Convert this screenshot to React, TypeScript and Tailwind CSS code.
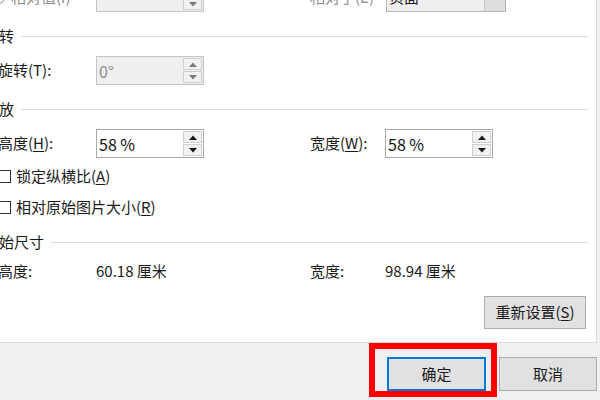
import React from "react";

const font = "font-['Microsoft_YaHei','Noto_Sans_CJK_SC','Noto_Sans',sans-serif]";

function Arrow({ up, gray }: { up?: boolean; gray?: boolean }) {
  return (
    <svg width="8" height="5" viewBox="0 0 8 5">
      <path
        d={up ? "M0 5 L4 0.5 L8 5 Z" : "M0 0 L4 4.5 L8 0 Z"}
        fill={gray ? "#7a7a7a" : "#1a1a1a"}
      />
    </svg>
  );
}

function Spinner({ disabled }: { disabled?: boolean }) {
  return (
    <div className="flex h-full w-[20px] flex-col gap-[1px] py-[1px] pr-[1px]">
      <div className="flex flex-1 items-center justify-center border border-[#cfcfcf] bg-[#f2f2f2]">
        <Arrow up gray={disabled} />
      </div>
      <div className="flex flex-1 items-center justify-center border border-[#cfcfcf] bg-[#f2f2f2]">
        <Arrow gray={disabled} />
      </div>
    </div>
  );
}

function NumberBox({ value, disabled }: { value: string; disabled?: boolean }) {
  return (
    <div
      className={`flex h-[29px] w-[108px] shrink-0 items-stretch border ${
        disabled ? "border-[#c4c4c4] bg-[#efefef]" : "border-[#a8a8a8] bg-white"
      }`}
    >
      <span
        className={`flex flex-1 items-center pl-[2px] text-[16px] ${
          disabled ? "text-[#8d8d8d]" : "text-[#111]"
        }`}
      >
        {value}
      </span>
      <Spinner disabled={disabled} />
    </div>
  );
}

function Section({ title }: { title: string }) {
  return (
    <div className="flex h-[20px] items-center gap-[7px] pr-[8px]">
      <span className="-ml-[1px] text-[15px] text-[#1a1a1a]">{title}</span>
      <div className="h-px flex-1 bg-[#d9d9d9]" />
    </div>
  );
}

function Label({ children }: { children: React.ReactNode }) {
  return (
    <span className="w-[96px] shrink-0 -translate-x-[2px] text-[15px] text-[#1a1a1a]">
      {children}
    </span>
  );
}

function Checkbox({ children }: { children: React.ReactNode }) {
  return (
    <div className="flex h-[20px] items-center gap-[5px]">
      <div className="-ml-[2px] h-[13px] w-[13px] border border-[#333] bg-white" />
      <span className="text-[15px] text-[#1a1a1a]">{children}</span>
    </div>
  );
}

export default function App() {
  return (
    <div className={`flex h-[400px] w-[600px] flex-col overflow-hidden bg-[#f0f0f0] ${font}`}>
      {/* PANEL */}
      <div className="h-[343px] w-[597px] shrink-0 overflow-hidden border-r border-b border-[#dadada] bg-white">
        <div className="-mt-[17px] flex flex-col">
          {/* TOP ROW (cut off) */}
          <div className="flex h-[29px] items-center">
            <div className="flex w-[96px] shrink-0 items-center gap-[6px]">
              <div className="-ml-[8px] h-[13px] w-[13px] rounded-full border border-[#888]" />
              <span className="text-[15px] text-[#8d8d8d]">相对值(I)</span>
            </div>
            <NumberBox value="" disabled />
            <span className="ml-[106px] w-[76px] shrink-0 text-[15px] text-[#8d8d8d]">相对于(E)</span>
            <div className="flex h-[29px] w-[120px] border border-[#b5b5b5] bg-[#efefef]">
              <span className="flex flex-1 items-center pl-[2px] text-[15px] text-[#1a1a1a]">页面</span>
              <div className="w-[21px] border-l border-[#c4c4c4] bg-[#dedede]" />
            </div>
          </div>

          <div className="mt-[14px]">
            <Section title="转" />
          </div>

          <div className="mt-[10px] flex h-[29px] items-center">
            <Label>旋转(T):</Label>
            <NumberBox value="0°" disabled />
          </div>

          <div className="mt-[14px]">
            <Section title="放" />
          </div>

          <div className="mt-[10px] flex h-[29px] items-center">
            <Label>
              高度(<span className="underline underline-offset-2">H</span>):
            </Label>
            <NumberBox value="58 %" />
            <span className="ml-[106px] w-[75px] shrink-0 text-[15px] text-[#1a1a1a]">
              宽度(<span className="underline underline-offset-2">W</span>):
            </span>
            <NumberBox value="58 %" />
          </div>

          <div className="mt-[8px]">
            <Checkbox>
              锁定纵横比(<span className="underline underline-offset-2">A</span>)
            </Checkbox>
          </div>
          <div className="mt-[11px]">
            <Checkbox>
              相对原始图片大小(<span className="underline underline-offset-2">R</span>)
            </Checkbox>
          </div>

          <div className="mt-[15px]">
            <Section title="始尺寸" />
          </div>

          <div className="mt-[9px] flex h-[20px] items-center text-[15px] text-[#1a1a1a]">
            <Label>高度:</Label>
            <span className="w-[214px] shrink-0">60.18 厘米</span>
            <span className="w-[75px] shrink-0">宽度:</span>
            <span>98.94 厘米</span>
          </div>

          <div className="mt-[15px] flex justify-end pr-[10px]">
            <button
              type="button"
              className="h-[33px] w-[102px] border border-[#adadad] bg-[#e1e1e1] text-[15px] text-[#1a1a1a]"
            >
              重新设置(<span className="underline underline-offset-2">S</span>)
            </button>
          </div>
        </div>
      </div>

      {/* FOOTER BUTTONS */}
      <div className="relative flex justify-end gap-[13px] pt-[14px] pr-[3px]">
        <button
          type="button"
          className="h-[34px] w-[99px] border-2 border-[#0078d7] bg-[#e1e1e1] text-[15px] text-[#1a1a1a]"
        >
          确定
        </button>
        <button
          type="button"
          className="h-[34px] w-[98px] border border-[#adadad] bg-[#e1e1e1] text-[15px] text-[#1a1a1a]"
        >
          取消
        </button>
        {/* red highlight annotation */}
        <div className="pointer-events-none absolute top-0 left-[369px] h-[54px] w-[128px] border-[6px] border-[#ff0000]" />
      </div>
    </div>
  );
}
